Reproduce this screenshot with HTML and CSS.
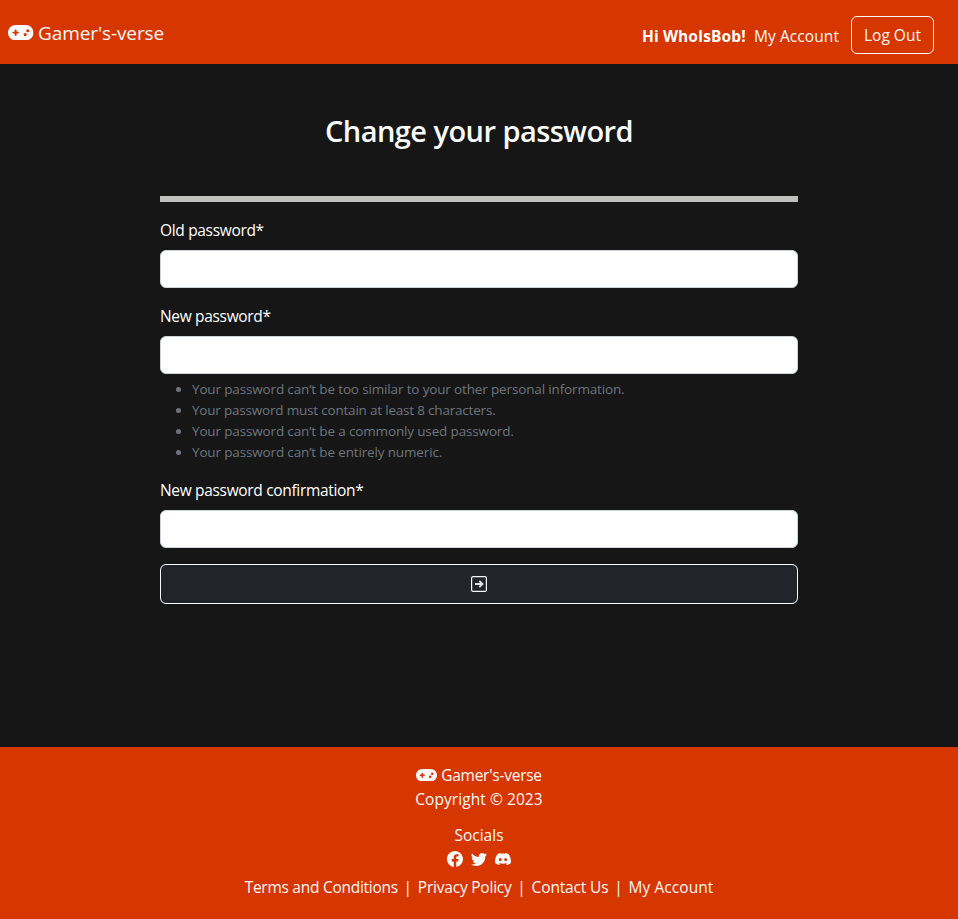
FILE: index.html
```html
<!DOCTYPE html>
<html lang="en">
<head>
<meta charset="utf-8">
<title>Change your password</title>
<link rel="stylesheet" href="styles.css">
</head>
<body>
<svg class="sprite" aria-hidden="true">
  <symbol id="gamepad" viewBox="0 64 640 384"><path d="M192 64C86 64 0 150 0 256S86 448 192 448H448c106 0 192-86 192-192s-86-192-192-192H192zM496 168a40 40 0 1 1 0 80 40 40 0 1 1 0-80zM392 304a40 40 0 1 1 80 0 40 40 0 1 1 -80 0zM168 200c0-13.300 10.700-24 24-24s24 10.700 24 24v32h32c13.300 0 24 10.700 24 24s-10.700 24-24 24H216v32c0 13.300-10.700 24-24 24s-24-10.700-24-24V280H136c-13.300 0-24-10.700-24-24s10.700-24 24-24h32V200z"/></symbol>
</svg>
<header class="navbar">
  <a class="brand"><svg class="brand-icon"><use href="#gamepad"/></svg><span class="brand-name">Gamer's-verse</span></a>
  <nav class="account">
    <strong class="greeting">Hi WhoIsBob!</strong>
    <a class="account-link">My Account</a>
    <a class="logout">Log Out</a>
  </nav>
</header>
<main class="content">
  <h2 class="title">Change your password</h2>
  <hr class="rule">
  <form class="form">
    <label class="label" for="old">Old password*</label>
    <input class="input" id="old" type="password">
    <label class="label" for="new">New password*</label>
    <input class="input input-hinted" id="new" type="password">
    <ul class="hints">
      <li>Your password can’t be too similar to your other personal information.</li>
      <li class="tight">Your password must contain at least 8 characters.</li>
      <li>Your password can’t be a commonly used password.</li>
      <li>Your password can’t be entirely numeric.</li>
    </ul>
    <label class="label" for="confirm">New password confirmation*</label>
    <input class="input" id="confirm" type="password">
    <button class="submit" type="button" aria-label="Submit">
      <svg width="16" height="16" viewBox="0 0 16 16"><rect class="frame" x=".6" y=".6" width="14.800" height="14.800" rx="1.500"/><path class="arrow" d="M4 8h7.500M8.300 4.800 11.500 8l-3.200 3.200"/></svg>
    </button>
  </form>
</main>
<footer class="footer">
  <div class="footer-brand"><svg class="footer-icon"><use href="#gamepad"/></svg><span class="footer-name">Gamer's-verse</span></div>
  <div class="copyright">Copyright © 2023</div>
  <div class="socials-title">Socials</div>
  <div class="socials">
    <svg viewBox="0 0 16 16"><path d="M16 8.049c0-4.446-3.582-8.050-8-8.050C3.580 0-.002 3.603-.002 8.050c0 4.017 2.926 7.347 6.750 7.951v-5.625h-2.030V8.050H6.750V6.275c0-2.017 1.195-3.131 3.022-3.131.876 0 1.791.157 1.791.157v1.980h-1.009c-.993 0-1.303.621-1.303 1.258v1.510h2.218l-.354 2.326H9.250V16c3.824-.604 6.750-3.934 6.750-7.951z"/></svg>
    <svg viewBox="0 0 16 16"><path d="M5.026 15c6.038 0 9.341-5.003 9.341-9.334 0-.14 0-.282-.006-.422A6.685 6.685 0 0 0 16 3.542a6.658 6.658 0 0 1-1.889.518 3.301 3.301 0 0 0 1.447-1.817 6.533 6.533 0 0 1-2.087.793A3.286 3.286 0 0 0 7.875 6.030a9.325 9.325 0 0 1-6.767-3.429 3.289 3.289 0 0 0 1.018 4.382A3.323 3.323 0 0 1 .64 6.575v.045a3.288 3.288 0 0 0 2.632 3.218 3.203 3.203 0 0 1-.865.115 3.230 3.230 0 0 1-.614-.057 3.283 3.283 0 0 0 3.067 2.277A6.588 6.588 0 0 1 .78 13.580a6.320 6.320 0 0 1-.78-.045A9.344 9.344 0 0 0 5.026 15z"/></svg>
    <svg viewBox="0 0 16 16"><path d="M13.545 2.907a13.227 13.227 0 0 0-3.257-1.011.05.05 0 0 0-.052.025c-.141.25-.297.577-.406.833a12.190 12.190 0 0 0-3.658 0 8.258 8.258 0 0 0-.412-.833.051.051 0 0 0-.052-.025c-1.125.194-2.220.534-3.257 1.011a.041.041 0 0 0-.021.018C.356 6.024-.213 9.047.066 12.032c.001.014.010.028.021.037a13.276 13.276 0 0 0 3.995 2.020.05.05 0 0 0 .056-.019c.308-.42.582-.863.818-1.329a.05.05 0 0 0-.028-.070 8.735 8.735 0 0 1-1.248-.595.05.05 0 0 1-.005-.083c.084-.063.168-.129.248-.195a.05.05 0 0 1 .051-.007c2.619 1.196 5.454 1.196 8.041 0a.052.052 0 0 1 .053.007c.08.066.164.132.248.195a.051.051 0 0 1-.004.085 8.254 8.254 0 0 1-1.249.594.05.05 0 0 0-.027.070c.24.465.515.909.817 1.329a.05.05 0 0 0 .056.019 13.235 13.235 0 0 0 4.001-2.020.049.049 0 0 0 .021-.037c.334-3.451-.559-6.449-2.366-9.106a.034.034 0 0 0-.020-.019zM5.347 10.214c-.789 0-1.438-.724-1.438-1.612 0-.889.637-1.613 1.438-1.613.807 0 1.450.73 1.438 1.613 0 .888-.637 1.612-1.438 1.612zm5.316 0c-.788 0-1.438-.724-1.438-1.612 0-.889.637-1.613 1.438-1.613.807 0 1.451.73 1.438 1.613 0 .888-.631 1.612-1.438 1.612z"/></svg>
  </div>
  <div class="links"><a class="terms">Terms and Conditions</a><i>|</i><a class="privacy">Privacy Policy</a><i>|</i><a class="contact">Contact Us</a><i>|</i><a class="mine">My Account</a></div>
</footer>
</body>
</html>
```
FILE: styles.css
```css
* { box-sizing: border-box; }
body {
  margin: 0;
  height: 919px;
  display: flex;
  flex-direction: column;
  background: #161616;
  color: #f8f9fa;
  font: 15.500px/24px "Open Sans", "Noto Sans", sans-serif;
  white-space: nowrap;
  overflow: hidden;
}
svg { fill: currentColor; display: block; }
.sprite { position: absolute; width: 0; height: 0; }
.navbar {
  flex: none;
  height: 64px;
  padding: 0 24px 0 8px;
  background: #d63600;
  display: flex;
  justify-content: space-between;
}
.brand { display: flex; align-items: center; height: 66px; font-size: 19px; letter-spacing: -.1px; }
.brand-icon { width: 25.500px; height: 15.300px; margin: 0 4.500px 1px 0; }
.account { display: flex; padding-top: 16px; }
.greeting { width: 112px; line-height: 40px; font-weight: 700; color: #fff; letter-spacing: .1px; }
.account-link { width: 97px; line-height: 40px; letter-spacing: .08px; }
.logout {
  width: 83px;
  height: 38px;
  line-height: 37px;
  border: 1px solid #f8f9fa;
  border-radius: 6px;
  text-align: center;
}
.content { flex: 1; width: 638px; margin: 0 auto; }
.title {
  margin: 48px 0 0;
  font-size: 29px;
  line-height: 38px;
  font-weight: 600;
  letter-spacing: -.55px;
  text-align: center;
}
.rule { height: 6px; margin: 46px 0 16px; border: 0; background: #c0c1bf; }
.form { display: flex; flex-direction: column; }
.label { margin-bottom: 8px; height: 24px; color: #fff; letter-spacing: -.33px; }
.input {
  height: 38px;
  margin: 0 0 16px;
  border: 1px solid #ced4da;
  border-radius: 6px;
  background: #fff;
}
.input-hinted { margin-bottom: 5px; }
.hints {
  margin: 0 0 15px;
  padding-left: 32px;
  font-size: 13.500px;
  letter-spacing: -.15px;
  line-height: 21px;
  color: #6c757d;
}
.tight { letter-spacing: -.2px; }
.submit {
  height: 40px;
  padding: 0;
  border: 1px solid #f8f9fa;
  border-radius: 6px;
  background: #212529;
  color: #f8f9fa;
  display: flex;
  align-items: center;
  justify-content: center;
}
.frame, .arrow { fill: none; stroke: currentColor; stroke-width: 1.200; }
.arrow { stroke-width: 1.800; opacity: .9; }
.footer {
  flex: none;
  height: 172px;
  padding-top: 16px;
  background: #d63600;
  display: flex;
  flex-direction: column;
  align-items: center;
}
.footer-brand { display: flex; align-items: center; }
.footer-icon { width: 21px; height: 12.600px; margin-right: 4px; }
.footer-name { letter-spacing: -.25px; }
.copyright { letter-spacing: .06px; }
.socials-title { margin-top: 12px; }
.socials { display: flex; gap: 8px; margin-top: 4px; }
.socials svg { width: 16px; height: 16px; }
.links { display: flex; margin-top: 8px; }
.links i { font-style: normal; width: 20px; text-align: center; }
.terms { letter-spacing: -.27px; }
.privacy { letter-spacing: -.22px; }
.contact { letter-spacing: -.15px; }
.mine { letter-spacing: .06px; }
```
